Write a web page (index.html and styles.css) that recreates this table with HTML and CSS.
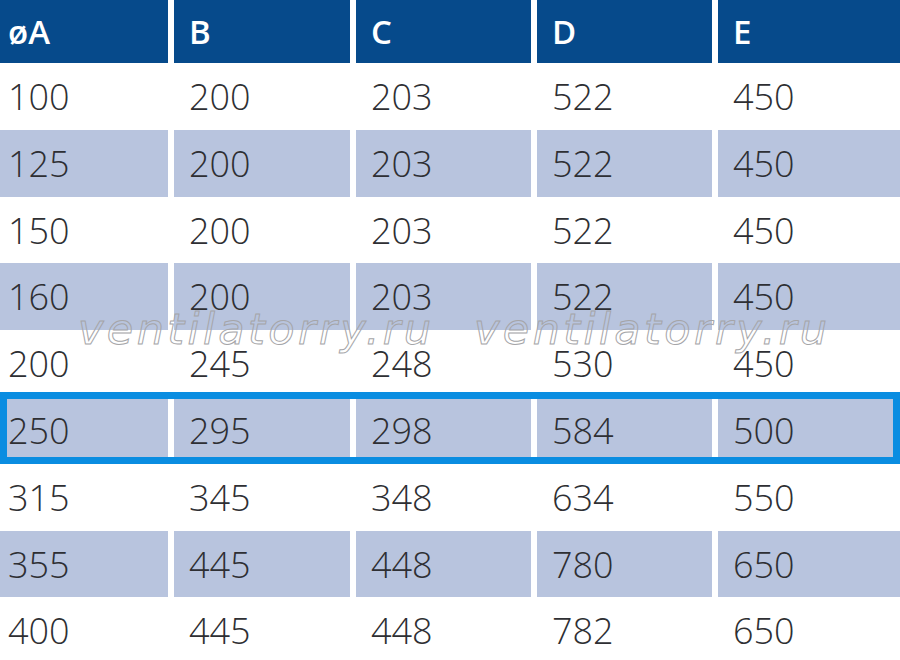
FILE: index.html
```html
<!DOCTYPE html>
<html lang="ru">
<head>
<meta charset="utf-8">
<title>Размеры</title>
<link rel="stylesheet" href="styles.css">
</head>
<body>
<div class="table">
  <div class="row head">
    <div class="cell">øA</div><div class="cell">B</div><div class="cell">C</div><div class="cell">D</div><div class="cell">E</div>
  </div>
  <div class="row"><div class="cell">100</div><div class="cell">200</div><div class="cell">203</div><div class="cell">522</div><div class="cell">450</div></div>
  <div class="row alt"><div class="cell">125</div><div class="cell">200</div><div class="cell">203</div><div class="cell">522</div><div class="cell">450</div></div>
  <div class="row"><div class="cell">150</div><div class="cell">200</div><div class="cell">203</div><div class="cell">522</div><div class="cell">450</div></div>
  <div class="row alt"><div class="cell">160</div><div class="cell">200</div><div class="cell">203</div><div class="cell">522</div><div class="cell">450</div></div>
  <div class="row"><div class="cell">200</div><div class="cell">245</div><div class="cell">248</div><div class="cell">530</div><div class="cell">450</div></div>
  <div class="row alt"><div class="cell">250</div><div class="cell">295</div><div class="cell">298</div><div class="cell">584</div><div class="cell">500</div></div>
  <div class="row"><div class="cell">315</div><div class="cell">345</div><div class="cell">348</div><div class="cell">634</div><div class="cell">550</div></div>
  <div class="row alt"><div class="cell">355</div><div class="cell">445</div><div class="cell">448</div><div class="cell">780</div><div class="cell">650</div></div>
  <div class="row"><div class="cell">400</div><div class="cell">445</div><div class="cell">448</div><div class="cell">782</div><div class="cell">650</div></div>

  <div class="highlight"></div>
  <div class="watermark">
    <span class="wm wm-left">ventilatorry.ru</span>
    <span class="wm wm-right">ventilatorry.ru</span>
  </div>
</div>
</body>
</html>
```

FILE: styles.css
```css
html, body {
  margin: 0;
  padding: 0;
  background: #ffffff;
  overflow: hidden;
}

body {
  width: 900px;
  height: 660px;
  font-family: "Open Sans", "Noto Sans", sans-serif;
}

.table {
  position: relative;
  width: 900px;
  height: 660px;
  overflow: hidden;
}

.row {
  display: grid;
  grid-template-columns: 168px 176px 175px 175px 1fr;
  column-gap: 6px;
  height: 66.8px;
}

.cell {
  box-sizing: border-box;
  padding-left: 15px;
  padding-top: 2px;
  font-size: 36px;
  font-weight: 300;
  line-height: 64.8px;
  color: #2e2f33;
  white-space: nowrap;
}

.cell:first-child {
  padding-left: 8px;
}

.alt .cell {
  background: #b8c4de;
}

.head {
  height: 63px;
}

.head .cell {
  background: #064a8b;
  color: #ffffff;
  font-size: 33px;
  font-weight: 600;
  line-height: 63px;
  padding-top: 0;
}

.highlight {
  position: absolute;
  left: 0;
  top: 392px;
  width: 900px;
  height: 72px;
  box-sizing: border-box;
  border: 7px solid #0a8de1;
}

.watermark {
  position: absolute;
  left: 0;
  top: 304px;
  width: 900px;
  height: 50px;
}

.wm {
  position: absolute;
  top: 0;
  font-family: "DejaVu Sans", sans-serif;
  font-style: oblique;
  font-size: 43px;
  letter-spacing: 3.4px;
  line-height: 50px;
  color: transparent;
  -webkit-text-stroke: 1px #a5a5a8;
}

.wm-left {
  left: 78px;
}

.wm-right {
  left: 474px;
}
```
